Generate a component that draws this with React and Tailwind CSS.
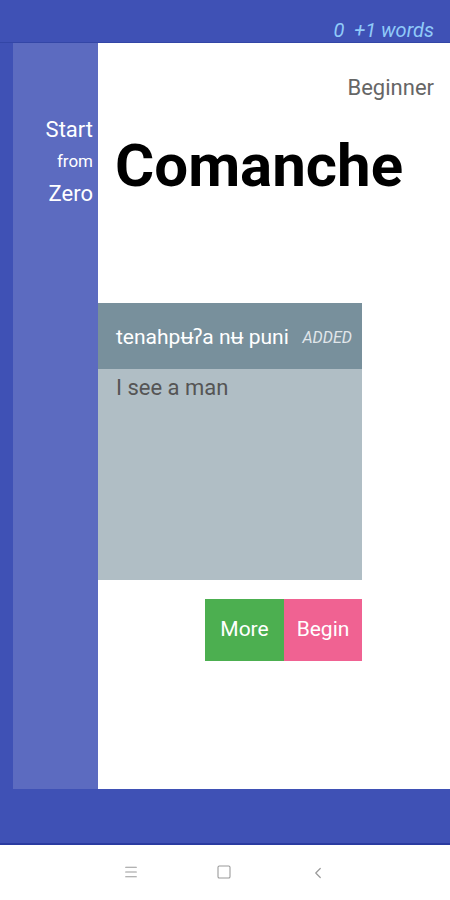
import { Menu, Square, ChevronLeft } from "lucide-react";

function App() {
    return (
        <div className="w-[450px] h-[900px] flex flex-col bg-white overflow-hidden" style={{ fontFamily: "Roboto, 'Noto Sans', sans-serif" }}>
            {/* top bar */}
            <div className="h-[43px] bg-[#3f51b5] border-b border-[#3346a6] flex justify-end items-end pr-[16px] pb-0">
                <span className="italic text-[#90caf9] text-[20px] leading-[24px]">0&nbsp;&nbsp;+1 words</span>
            </div>

            {/* main */}
            <div className="h-[746px] flex bg-[#3f51b5] pl-[13px]">
                <div className="w-[85px] bg-[#5c6bc0] flex flex-col items-end pr-[5px] pt-[72px] text-white">
                    <span className="text-[22px] leading-[30px]">Start</span>
                    <span className="text-[17px] leading-[32px]">from</span>
                    <span className="text-[22px] leading-[34px]">Zero</span>
                </div>
                <div className="flex-1 bg-white flex flex-col">
                    <div className="flex justify-end pr-[16px] pt-[31px]">
                        <span className="text-[#666] text-[22px] leading-[28px]">Beginner</span>
                    </div>
                    <h1 className="pl-[17px] pt-[31px] text-black font-bold text-[60px] leading-[66px]">Comanche</h1>
                    <div className="mt-[104px] w-[264px] flex flex-col">
                        <div className="h-[66px] bg-[#78909c] flex items-center justify-between pl-[18px] pr-[10px] pt-[4px]">
                            <span className="text-white text-[21px]">tenahpʉʔa nʉ puni</span>
                            <span className="italic text-[#e0e6ea] text-[16px]">ADDED</span>
                        </div>
                        <div className="h-[211px] bg-[#b0bec5] pl-[18px] pt-[4px]">
                            <span className="text-[#555] text-[22px] leading-[30px]">I see a man</span>
                        </div>
                    </div>
                    <div className="w-[264px] flex justify-end mt-[19px]">
                        <div className="w-[79px] h-[62px] bg-[#4caf50] text-white text-[21px] flex items-center justify-center">More</div>
                        <div className="w-[78px] h-[62px] bg-[#f06292] text-white text-[21px] flex items-center justify-center">Begin</div>
                    </div>
                </div>
            </div>

            {/* bottom blue */}
            <div className="h-[56px] bg-[#3f51b5] border-b-2 border-[#2a3ba0]"></div>

            {/* nav bar */}
            <div className="h-[55px] bg-white flex items-center">
                <div className="flex-1 flex justify-around px-[85px] text-[#999]">
                    <Menu size={16} strokeWidth={1.6} />
                    <Square size={16} strokeWidth={1.6} />
                    <ChevronLeft size={18} strokeWidth={1.6} />
                </div>
            </div>
        </div>
    );
}

export default App;
